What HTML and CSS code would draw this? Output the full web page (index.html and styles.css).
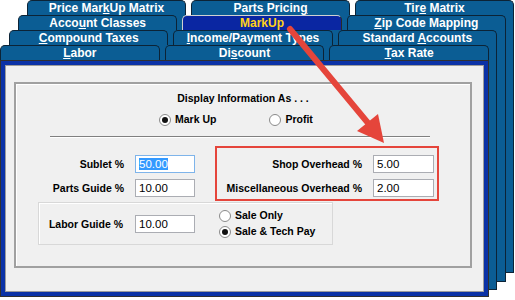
FILE: index.html
```html
<!DOCTYPE html>
<html lang="en">
<head>
  <meta charset="UTF-8">
  <meta name="viewport" content="width=device-width, initial-scale=1.0">
  <title>Pricing Setup - MarkUp</title>
  <link rel="stylesheet" href="styles.css">
</head>
<body>
  <div class="layer l1">
    <div class="tabrow">
      <div class="tab">Price Mar<u>k</u>Up Matrix</div>
      <div class="tab">Parts Pricin<u>g</u></div>
      <div class="tab">Tir<u>e</u> Matrix</div>
    </div>
    <div class="sheet s1">
      <div class="layer l2">
        <div class="tabrow">
          <div class="tab">Acco<u>u</u>nt Classes</div>
          <div class="tab active">MarkUp</div>
          <div class="tab"><u>Z</u>ip Code Mapping</div>
        </div>
        <div class="sheet s2">
          <div class="layer l3">
            <div class="tabrow">
              <div class="tab"><u>C</u>ompound Taxes</div>
              <div class="tab"><u>I</u>ncome/Payment Types</div>
              <div class="tab">Standard <u>A</u>ccounts</div>
            </div>
            <div class="sheet s3">
              <div class="layer l4">
                <div class="tabrow">
                  <div class="tab"><u>L</u>abor</div>
                  <div class="tab">Di<u>s</u>count</div>
                  <div class="tab"><u>T</u>ax Rate</div>
                </div>
                <div class="panel">
                  <div class="frame">
                    <div class="group">
                      <div class="group-title">Display Information As . . .</div>
                      <div class="mode-row">
                        <label class="radio"><span class="dot on"></span>Mark Up</label>
                        <label class="radio"><span class="dot"></span>Profit</label>
                      </div>
                      <div class="rule"></div>
                      <div class="fields">
                        <div class="field-grid left">
                          <span class="label">Sublet %</span>
                          <span class="input focus"><span class="sel">50.00</span></span>
                          <span class="label">Parts Guide %</span>
                          <span class="input">10.00</span>
                        </div>
                        <div class="field-grid overhead">
                          <span class="label">Shop Overhead %</span>
                          <span class="input">5.00</span>
                          <span class="label">Miscellaneous Overhead %</span>
                          <span class="input">2.00</span>
                        </div>
                      </div>
                      <div class="labor-box">
                        <span class="label labor-label">Labor Guide %</span>
                        <span class="input labor-input">10.00</span>
                        <div class="pay-options">
                          <label class="radio"><span class="dot"></span>Sale Only</label>
                          <label class="radio"><span class="dot on"></span>Sale &amp; Tech Pay</label>
                        </div>
                      </div>
                    </div>
                  </div>
                </div>
              </div>
            </div>
          </div>
        </div>
      </div>
    </div>
  </div>

  <svg class="arrow" width="515" height="300" viewBox="0 0 515 300">
    <line x1="290" y1="29" x2="368" y2="123" stroke="#e5453b" stroke-width="6" stroke-linecap="round"/>
    <polygon points="384,143 357,131 378,114" fill="#e5453b"/>
  </svg>
</body>
</html>
```

FILE: styles.css
```css
body {
  margin: 0;
  width: 515px;
  height: 300px;
  overflow: hidden;
  position: relative;
  background: #fff;
  font-family: "Liberation Sans", Arial, sans-serif;
  color: #000;
}

/* stacked tab pages */
.l1 {
  margin-left: 27px;
  width: 487px;
}
.l2,
.l3 {
  margin-left: -9px;
  width: 488px;
}
.l4 {
  margin-left: -9px;
  width: 489px;
}
.tabrow {
  display: flex;
  gap: 5px;
  height: 15px;
}
.tab {
  flex: 1;
  box-sizing: border-box;
  height: 15px;
  background: #0b5d94;
  border: 1px solid #0c2336;
  border-bottom: none;
  border-radius: 5px 5px 0 0;
  color: #fff;
  font-size: 12px;
  font-weight: bold;
  line-height: 14px;
  text-align: center;
  white-space: nowrap;
}
.tab u {
  text-underline-offset: 1px;
}
.tab.active {
  background: #0a26a2;
  color: #ffd21a;
  border-color: #d0d0d0 #2a2a2a #2a2a2a #d0d0d0;
}
.sheet {
  box-sizing: border-box;
  background: #0b5d94;
  border-right: 1px solid #0c2336;
  border-bottom: 1px solid #0c2336;
}
.s1 {
  height: 258px;
}
.s2 {
  height: 252px;
}
.s3 {
  height: 245px;
}

/* front page */
.panel {
  box-sizing: border-box;
  height: 237px;
  border: 1px solid #303030;
}
.frame {
  box-sizing: border-box;
  height: 100%;
  border: 4px solid #0b32a6;
  background: #f0f0f0;
  box-shadow: inset 0 0 0 1px #9c9c9c;
  padding: 17px 0 0 9px;
}
.group {
  box-sizing: border-box;
  width: 458px;
  height: 186px;
  border: 2px solid #a0a0a0;
  box-shadow: inset 1px 1px 0 #fff;
}
.group-title {
  margin-top: 8px;
  text-align: center;
  font-size: 10.5px;
  font-weight: bold;
  line-height: 13px;
}
.mode-row {
  display: flex;
  gap: 53px;
  margin: 8px 0 0 143px;
}
.radio {
  display: flex;
  align-items: center;
  gap: 4px;
  font-size: 10.5px;
  font-weight: bold;
  line-height: 13px;
  white-space: nowrap;
}
.dot {
  box-sizing: border-box;
  width: 12px;
  height: 12px;
  border: 1px solid #8a8a8a;
  border-radius: 50%;
  background: #fff;
  display: flex;
  align-items: center;
  justify-content: center;
}
.dot.on::after {
  content: "";
  width: 6px;
  height: 6px;
  border-radius: 50%;
  background: #111;
}
.rule {
  margin: 10px 0 0 34px;
  width: 380px;
  border-top: 1px solid #808080;
  border-bottom: 1px solid #fff;
}

.fields {
  display: flex;
  align-items: flex-start;
  margin: 8px 0 0 22px;
}
.field-grid {
  display: grid;
  row-gap: 6px;
  column-gap: 11px;
  align-items: center;
}
.left {
  padding-top: 9px;
  grid-template-columns: 86px 60px;
}
.overhead {
  box-sizing: border-box;
  width: 224px;
  margin-left: 20px;
  padding: 7px 3px 2px 0;
  border: 2px solid #e5453b;
  grid-template-columns: 145px 61px;
}
.label {
  text-align: right;
  font-size: 10.5px;
  font-weight: bold;
  white-space: nowrap;
}
.input {
  box-sizing: border-box;
  height: 18px;
  padding: 0 3px;
  border: 1px solid #abadb3;
  background: #fff;
  font-size: 11.5px;
  line-height: 16px;
}
.input.focus {
  border-color: #7eb4ea;
}
.sel {
  background: #3399ff;
  color: #fff;
}

.labor-box {
  box-sizing: border-box;
  display: flex;
  align-items: center;
  width: 295px;
  height: 43px;
  margin: 1px 0 0 22px;
  border: 1px solid #d8d8d8;
  box-shadow: inset 1px 1px 0 #fff;
}
.labor-label {
  width: 84px;
  margin-right: 12px;
}
.labor-input {
  width: 60px;
}
.pay-options {
  display: flex;
  flex-direction: column;
  gap: 3px;
  margin-left: 24px;
}

.arrow {
  position: absolute;
  left: 0;
  top: 0;
  pointer-events: none;
}
```
